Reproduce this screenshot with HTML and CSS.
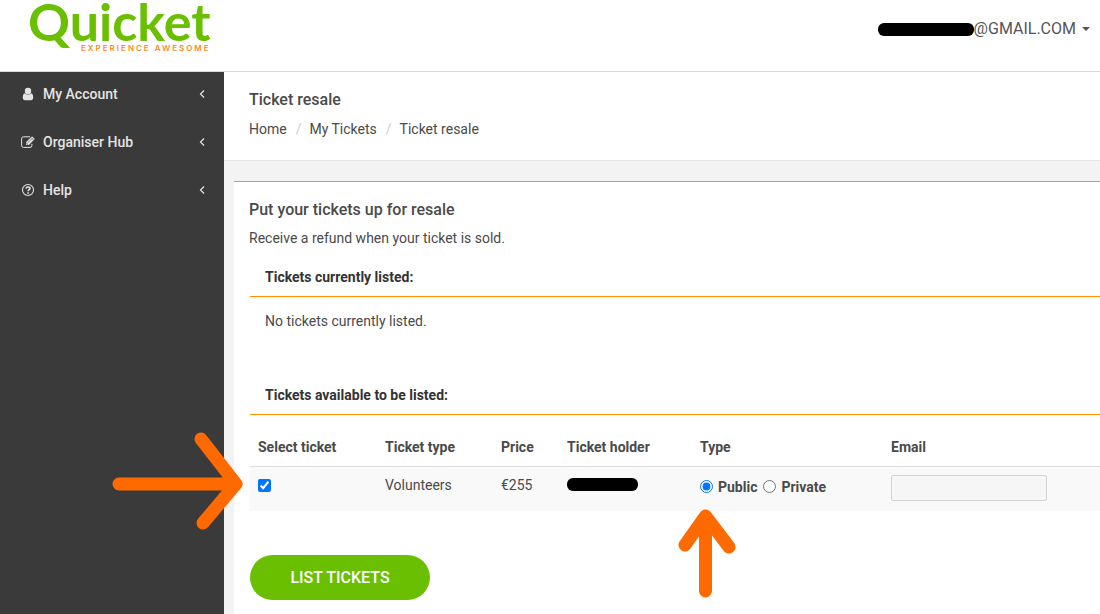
FILE: index.html
```html
<!DOCTYPE html>
<html lang="en">
<head>
    <meta charset="UTF-8">
    <meta name="viewport" content="width=device-width, initial-scale=1.0">
    <title>Ticket resale</title>
    <link rel="stylesheet" href="styles.css">
</head>
<body>
    <header class="topbar">
        <a href="#" class="logo">
            <span class="logo-name">Quicket</span>
            <span class="logo-tagline">EXPERIENCE AWESOME</span>
        </a>
        <button type="button" class="user-menu">
            <span class="redacted redacted-user"></span><span>@GMAIL.COM</span>
            <span class="caret"></span>
        </button>
    </header>

    <div class="page">
        <nav class="sidebar">
            <ul class="menu">
                <li>
                    <a href="#" class="menu-link">
                        <svg class="menu-icon" viewBox="0 0 14 14" fill="currentColor">
                            <circle cx="7" cy="4" r="3.200"/>
                            <path d="M4 6.200C2.200 6.600 1.800 8.500 1.800 10.700C1.800 12.200 2.600 13.200 4 13.200h6c1.400 0 2.200-1 2.200-2.500C12.200 8.500 11.800 6.600 10 6.200C9.200 7.100 8.200 7.500 7 7.500S4.800 7.100 4 6.200z"/>
                        </svg>
                        <span>My Account</span>
                        <svg class="arrow" viewBox="0 0 6 10"><path d="M5 1.500L1.500 5L5 8.500"/></svg>
                    </a>
                </li>
                <li>
                    <a href="#" class="menu-link">
                        <svg class="menu-icon" viewBox="0 0 14 14" fill="none" stroke="currentColor">
                            <path d="M9 1.800H2.500Q.6 1.800 .6 3.700v6.800q0 1.900 1.900 1.900H9q1.900 0 1.900-1.900V8.800"/>
                            <path d="M5 7.300L11 1.300L13.800 4.100L7.800 10H5z" fill="currentColor" stroke="none"/>
                            <path d="M7 7.600L11.200 3.400M5.800 8v1.200h1.200M10 2.400l2.700 2.700" stroke="#3a3a3a" stroke-width=".6"/>
                        </svg>
                        <span>Organiser Hub</span>
                        <svg class="arrow" viewBox="0 0 6 10"><path d="M5 1.500L1.500 5L5 8.500"/></svg>
                    </a>
                </li>
                <li>
                    <a href="#" class="menu-link">
                        <svg class="menu-icon" viewBox="0 0 14 14" fill="none" stroke="currentColor">
                            <circle cx="7" cy="7" r="5.500" stroke-width="1.100"/>
                            <path d="M5 5.600C5.200 4.300 6 3.900 7 3.900C8.200 3.900 9 4.600 9 5.500C9 6.800 7.100 6.700 7.100 8.300" stroke-width="1.500"/>
                            <path d="M7.100 9.200v1.500" stroke-width="1.600"/>
                        </svg>
                        <span>Help</span>
                        <svg class="arrow" viewBox="0 0 6 10"><path d="M5 1.500L1.500 5L5 8.500"/></svg>
                    </a>
                </li>
            </ul>
        </nav>

        <main class="content">
            <div class="page-heading">
                <h1>Ticket resale</h1>
                <ol class="breadcrumb">
                    <li><a href="#">Home</a></li>
                    <li><a href="#">My Tickets</a></li>
                    <li>Ticket resale</li>
                </ol>
            </div>

            <form class="panel">
                <h2>Put your tickets up for resale</h2>
                <p class="intro">Receive a refund when your ticket is sold.</p>

                <section class="block">
                    <h3>Tickets currently listed:</h3>
                    <p class="empty">No tickets currently listed.</p>
                </section>

                <section class="block">
                    <h3>Tickets available to be listed:</h3>
                    <table class="tickets">
                        <thead>
                            <tr>
                                <th class="col-select">Select ticket</th>
                                <th class="col-ticket">Ticket type</th>
                                <th class="col-price">Price</th>
                                <th class="col-holder">Ticket holder</th>
                                <th class="col-type">Type</th>
                                <th>Email</th>
                            </tr>
                        </thead>
                        <tbody>
                            <tr>
                                <td class="marked">
                                    <input type="checkbox" class="tick" aria-label="Select ticket" checked>
                                    <svg class="pointer pointer-right" viewBox="0 0 132 100">
                                        <path d="M7 53H124M89 8L124 53L91 92"/>
                                    </svg>
                                </td>
                                <td>Volunteers</td>
                                <td>€255</td>
                                <td><span class="redacted redacted-holder"></span></td>
                                <td class="marked">
                                    <div class="choices">
                                        <input type="radio" name="type" id="public" checked>
                                        <label for="public">Public</label>
                                        <input type="radio" name="type" id="private">
                                        <label for="private">Private</label>
                                    </div>
                                    <svg class="pointer pointer-up" viewBox="0 0 58 90">
                                        <path d="M27.500 83V8M7 37L27.500 8L51 39"/>
                                    </svg>
                                </td>
                                <td><input type="email" class="email" aria-label="Email" disabled></td>
                            </tr>
                        </tbody>
                    </table>
                </section>

                <button type="button" class="submit">LIST TICKETS</button>
            </form>
        </main>
    </div>
</body>
</html>
```
FILE: styles.css
```css
* {
    box-sizing: border-box;
}
body {
    margin: 0;
    min-height: 100vh;
    display: flex;
    flex-direction: column;
    font-family: Roboto, sans-serif;
    font-size: 14px;
    line-height: 20px;
    color: #4a4a4a;
    background: #fff;
}
h1, h2, h3, p, ul, ol {
    margin: 0;
    padding: 0;
}
ul, ol {
    list-style: none;
}
a {
    color: inherit;
    text-decoration: none;
}

/* top bar */
.topbar {
    height: 72px;
    display: flex;
    justify-content: space-between;
    align-items: flex-start;
    padding: 0 10px 0 28px;
    border-bottom: 1px solid #d8d8d8;
}
.logo {
    display: flex;
    flex-direction: column;
    font-family: Lato, sans-serif;
    font-weight: bold;
}
.logo-name {
    font-size: 52px;
    line-height: 42px;
    color: #6abf00;
}
.logo-tagline {
    align-self: flex-end;
    font: 600 8px/12px Inter, sans-serif;
    letter-spacing: 2px;
    color: #ff8a1c;
}
.user-menu {
    display: flex;
    align-items: center;
    padding: 19px 0 0;
    border: 0;
    background: none;
    font: 16px/20px Roboto, sans-serif;
    color: #555;
    cursor: pointer;
}
.caret {
    margin-left: 6px;
    border: 4px solid transparent;
    border-top-color: #555;
    border-bottom: 0;
}
.redacted {
    display: inline-block;
    height: 13px;
    border-radius: 6px;
    background: #000;
}
.redacted-user {
    width: 96px;
}
.redacted-holder {
    width: 71px;
    vertical-align: top;
    margin-top: 3px;
}

.page {
    flex: 1;
    display: flex;
}

/* sidebar */
.sidebar {
    flex: 0 0 224px;
    background: #3a3a3a;
}
.menu {
    display: flex;
    flex-direction: column;
    gap: 4px;
}
.menu-link {
    display: flex;
    align-items: center;
    gap: 8px;
    padding: 12px 19px 12px 21px;
    font-weight: 500;
    color: #e4e4e4;
}
.menu-icon {
    width: 14px;
    height: 14px;
}
.arrow {
    width: 6px;
    height: 10px;
    margin-left: auto;
    fill: none;
    stroke: #e4e4e4;
    stroke-width: 1.2;
}

/* content */
.content {
    flex: 1;
    min-width: 0;
    display: flex;
    flex-direction: column;
    background: #f3f3f3;
}
.page-heading {
    padding: 18px 25px 21px;
    border-bottom: 1px solid #e7e7e7;
    background: #fff;
}
h1, h2 {
    font-size: 16px;
    line-height: 20px;
    font-weight: 500;
}
.breadcrumb {
    display: flex;
    margin-top: 9px;
}
.breadcrumb li + li::before {
    content: "/";
    padding: 0 8px 0 9px;
    color: #ccc;
}
.panel {
    flex: 1;
    margin: 20px 0 0 10px;
    padding: 18px 0 14px 16px;
    border-top: 1px solid #f7941d;
    background: #fff;
}
.panel h2,
.intro {
    margin-left: -1px;
}
.intro {
    margin-top: 8px;
}
.block {
    margin-top: 11px;
}
.block h3 {
    padding: 8px 15px 9px;
    border-bottom: 1px solid #ff9000;
    font-size: 14px;
    line-height: 20px;
    font-weight: bold;
    color: #333;
}
.empty {
    padding: 14px 15px 35px;
}

/* tickets table */
.tickets {
    width: 100%;
    margin-top: 14px;
    border-collapse: separate;
    border-spacing: 0;
    table-layout: fixed;
}
.tickets th,
.tickets td {
    padding: 8px;
    text-align: left;
    vertical-align: top;
}
.tickets th {
    padding-bottom: 9px;
    border-bottom: 1px solid #ddd;
    font-weight: bold;
}
.tickets td {
    height: 44px;
    background: #f9f9f9;
}
.col-select {
    width: 127px;
}
.col-ticket {
    width: 116px;
}
.col-price {
    width: 66px;
}
.col-holder {
    width: 133px;
}
.col-type {
    width: 191px;
}
.tick {
    display: block;
    margin: 4px 0;
}
.choices {
    display: flex;
    align-items: center;
    font-weight: bold;
}
.choices input {
    margin: 0 5px 0 0;
}
.choices label {
    padding-top: 2px;
    margin-right: 6px;
}
.email {
    display: block;
    width: 156px;
    height: 26px;
    border: 1px solid #d3d3d3;
    border-radius: 2px;
    background: #f6f6f6;
}

/* hand drawn pointers over the row */
.marked {
    position: relative;
}
.pointer {
    position: absolute;
    fill: none;
    stroke: #ff6a00;
    stroke-width: 13;
    stroke-linecap: round;
    stroke-linejoin: round;
}
.pointer-right {
    left: -138px;
    top: -36px;
    width: 132px;
    height: 100px;
}
.pointer-up {
    left: -14px;
    top: 41px;
    width: 58px;
    height: 90px;
}

.submit {
    width: 180px;
    height: 45px;
    margin-top: 44px;
    border: 0;
    border-radius: 23px;
    background: #6abf00;
    font: 500 16px/20px Roboto, sans-serif;
    color: #fff;
    cursor: pointer;
}
```
